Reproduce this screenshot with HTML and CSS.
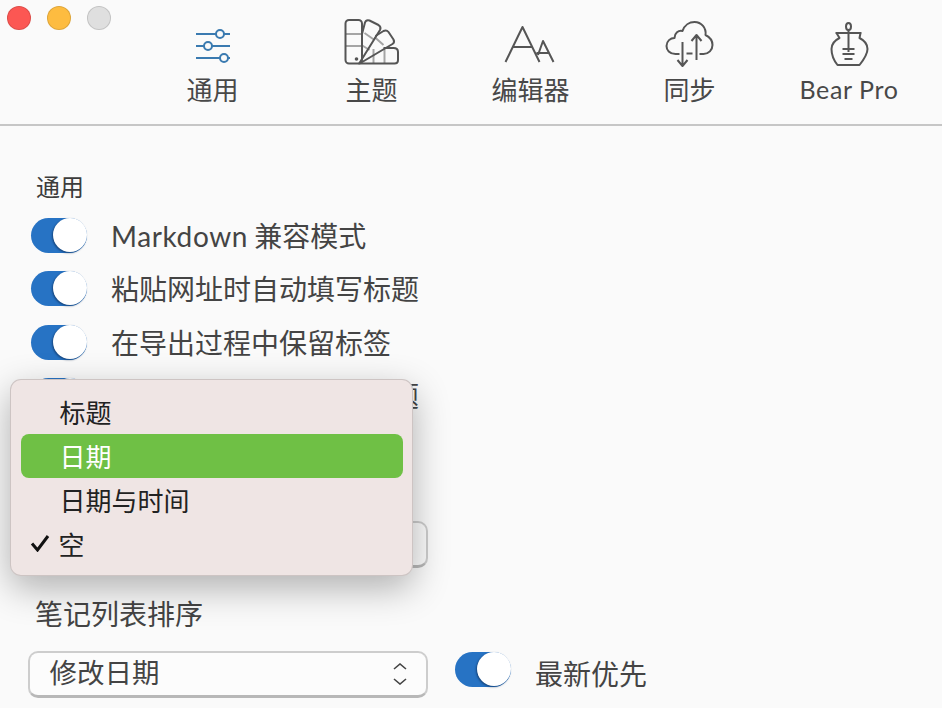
FILE: index.html
```html
<!DOCTYPE html>
<html lang="zh">
<head>
<meta charset="utf-8">
<title>Bear 偏好设置</title>
<link rel="stylesheet" href="styles.css">
</head>
<body>
<div class="window">
  <header class="toolbar">
    <div class="lights">
      <span class="light red"></span>
      <span class="light yellow"></span>
      <span class="light gray"></span>
    </div>
    <nav class="tabs">
      <div class="tab active">
        <svg class="icon" viewBox="182 14 60 56">
          <g class="blue">
            <path d="M196 34H216M224 34H230M196 46H204M212 46H230M196 58H220M228 58H230"/>
            <circle cx="220" cy="34" r="4"/>
            <circle cx="208" cy="46" r="4"/>
            <circle cx="224" cy="58" r="4"/>
          </g>
        </svg>
        <span class="tab-label">通用</span>
      </div>
      <div class="tab">
        <svg class="icon" viewBox="340.5 14 60 56">
          <g class="thin">
            <path d="M345 34H361M345 46H361M364 33L374 40M361 45L369 50M374 37L383 45M373 49V63M384 49V63"/>
          </g>
          <g class="line">
            <rect x="345" y="20" width="16.5" height="43.5" rx="3.5"/>
            <path d="M361.5 34L364.5 22.5Q365.5 19.5 369 20.5L378 25Q381 27 379.5 30L359 63"/>
            <path d="M375 36L383 31Q386 29.500 388 32L393 39.500Q394.500 42.500 392 44L360 63"/>
            <path d="M383 48H393Q397.500 48 397.500 52V60Q397.500 63.500 394 63.500H358"/>
          </g>
          <circle class="dot" cx="356" cy="59" r="1.800"/>
        </svg>
        <span class="tab-label">主题</span>
      </div>
      <div class="tab">
        <svg class="icon" viewBox="499.5 14 60 56">
          <g class="line">
            <path d="M505 62L522 27L539 62M513 47H531M537.500 55L542.500 41L553 62M536 53H549"/>
          </g>
        </svg>
        <span class="tab-label">编辑器</span>
      </div>
      <div class="tab">
        <svg class="icon" viewBox="658.5 14 60 56">
          <g class="line">
            <path d="M679 54H675C669 54 666 50 666 46C666 41 670 38 674 38C674 33 678 30 682 31C684 25 689 22 694 22C701 22 706 28 705 35C709 37 712 41 712 45C712 50 708 54 703 54H699"/>
            <path d="M682 42V65M677 60L682 66L687 60M686 53.500H692M696 60V36M691 41L696 35L701 41"/>
          </g>
        </svg>
        <span class="tab-label">同步</span>
      </div>
      <div class="tab">
        <svg class="icon" viewBox="818.5 14 60 56">
          <g class="line">
            <ellipse cx="849" cy="26.500" rx="2.500" ry="3.500"/>
            <path d="M849 30V52M836 33H862M837 33L840 38C834 41 832 45 832 49C832 54 834 60 838 65H860C864 60 868 54 868 49C868 45 866 41 860 38L861 33M843 49H855M843 54H855M845 59H853"/>
          </g>
        </svg>
        <span class="tab-label latin">Bear Pro</span>
      </div>
    </nav>
  </header>

  <main class="content">
    <h2 class="section-title">通用</h2>
    <div class="options">
      <div class="option"><span class="toggle"></span><span class="option-text"><span class="latin">Markdown</span> 兼容模式</span></div>
      <div class="option"><span class="toggle"></span><span class="option-text">粘贴网址时自动填写标题</span></div>
      <div class="option"><span class="toggle"></span><span class="option-text">在导出过程中保留标签</span></div>
      <div class="option"><span class="toggle"></span><span class="option-text">自动将首行设为笔记标题</span></div>
    </div>

    <div class="field first-field">
      <div class="field-label"></div>
      <div class="field-row">
        <div class="select"></div>
      </div>
    </div>

    <div class="field">
      <div class="field-label">笔记列表排序</div>
      <div class="field-row">
        <div class="select"><span>修改日期</span><svg class="chevrons" viewBox="0 0 14 22"><path d="M1 6L7 1L13 6M1 16L7 21L13 16"/></svg></div>
        <span class="toggle"></span>
        <span class="field-note">最新优先</span>
      </div>
    </div>
  </main>

  <div class="menu">
    <div class="menu-item">标题</div>
    <div class="menu-item selected">日期</div>
    <div class="menu-item">日期与时间</div>
    <div class="menu-item checked"><svg class="check" viewBox="0 0 20 18"><path d="M2 9.500L7.500 16L18 2"/></svg>空</div>
  </div>
</div>
</body>
</html>
```

FILE: styles.css
```css
* { box-sizing: border-box; }

html, body {
  margin: 0;
  height: 100%;
  overflow: hidden;
  background: #fafafa;
}

body {
  font-family: "Noto Sans CJK SC", "Noto Sans", sans-serif;
  color: #444;
}

.window {
  position: relative;
  width: 942px;
  height: 708px;
  overflow: hidden;
}

.latin {
  font-family: Lato, "Noto Sans", sans-serif;
}

/* Toolbar */
.toolbar {
  display: flex;
  justify-content: space-between;
  height: 126px;
  padding: 0 15px 0 7px;
  border-bottom: 2px solid #c6c6c6;
}

.lights {
  display: flex;
  gap: 16px;
  padding-top: 6px;
  align-self: flex-start;
}

.light {
  width: 24px;
  height: 24px;
  border-radius: 50%;
  border: 1px solid rgba(0, 0, 0, 0.12);
}
.light.red { background: #fc5753; }
.light.yellow { background: #fdbc40; }
.light.gray { background: #dfdfdf; }

.tabs {
  display: grid;
  grid-template-columns: repeat(5, 159px);
  padding-top: 14px;
}

.tab {
  display: flex;
  flex-direction: column;
  align-items: center;
}

.icon {
  display: block;
  width: 60px;
  height: 56px;
}

.tab-label {
  padding-left: 2px;
  font-size: 26px;
  line-height: 38px;
  color: #484848;
}
.tab-label.latin {
  padding-left: 3px;
  font-size: 25px;
  letter-spacing: 0.6px;
}

.icon g {
  fill: none;
  stroke-linejoin: round;
}
.line { stroke: #555; stroke-width: 2; }
.thin { stroke: #a5a5a5; stroke-width: 2; }
.blue { stroke: #3a7ab0; stroke-width: 2; }
.dot { fill: #555; }

/* Content */
.content {
  padding: 47px 0 0 31px;
}

.section-title {
  margin: 0 0 19px 5px;
  font-size: 24px;
  line-height: 26px;
  font-weight: 400;
  color: #3c3c3c;
}

.options {
  display: flex;
  flex-direction: column;
  gap: 18.300px;
}

.option {
  display: flex;
  align-items: center;
  gap: 24px;
  height: 35px;
}

.option-text {
  font-size: 28px;
  line-height: 35px;
  white-space: nowrap;
}
.option-text .latin {
  letter-spacing: 0.600px;
}

.toggle {
  position: relative;
  flex: none;
  display: block;
  width: 56px;
  height: 35px;
  border-radius: 18px;
  background: #2773c4;
}
.toggle::after {
  content: "";
  position: absolute;
  top: 0;
  right: 0;
  width: 34px;
  height: 34px;
  border-radius: 50%;
  background: #fff;
  box-shadow: -1px 1px 2px rgba(10, 40, 80, 0.6);
}

/* Fields */
.field {
  margin-top: 26px;
  margin-left: -3px;
}
.first-field {
  margin-top: 51px;
}

.field-label {
  height: 38px;
  margin-left: 7px;
  font-size: 28px;
  line-height: 38px;
  margin-bottom: 19px;
}

.field-row {
  display: flex;
  align-items: flex-start;
}

.select {
  display: flex;
  align-items: center;
  justify-content: space-between;
  width: 400px;
  height: 47px;
  padding: 0 19px 5px 19.500px;
  border: 2px solid #cdcdcd;
  border-bottom: 3px solid #b8b8b8;
  border-radius: 10px;
  background: #fcfcfc;
  font-size: 27.500px;
}

.chevrons {
  width: 14px;
  height: 22px;
  margin-top: 5px;
  fill: none;
  stroke: #444;
  stroke-width: 1.600;
}

.field-row .toggle {
  margin: 1px 0 0 27px;
}

.field-note {
  margin-left: 24px;
  font-size: 28px;
  line-height: 44px;
}

/* Popup menu */
.menu {
  position: absolute;
  left: 10px;
  top: 379px;
  width: 403px;
  height: 197px;
  padding: 11px 10.500px;
  border-radius: 11px;
  background: #efe5e4;
  box-shadow: inset 0 0 0 1px rgba(0, 0, 0, 0.14), 0 12px 36px rgba(0, 0, 0, 0.3);
}

.menu-item {
  display: flex;
  align-items: center;
  height: 44px;
  padding: 0 0 2px 39px;
  border-radius: 8px;
  font-size: 26px;
  color: #222;
}
.menu-item.selected {
  background: #6fc045;
  color: #fff;
}
.menu-item.checked {
  padding-left: 9px;
}

.check {
  width: 20px;
  height: 18px;
  margin-right: 9px;
  fill: none;
  stroke: #111;
  stroke-width: 3;
}
```
